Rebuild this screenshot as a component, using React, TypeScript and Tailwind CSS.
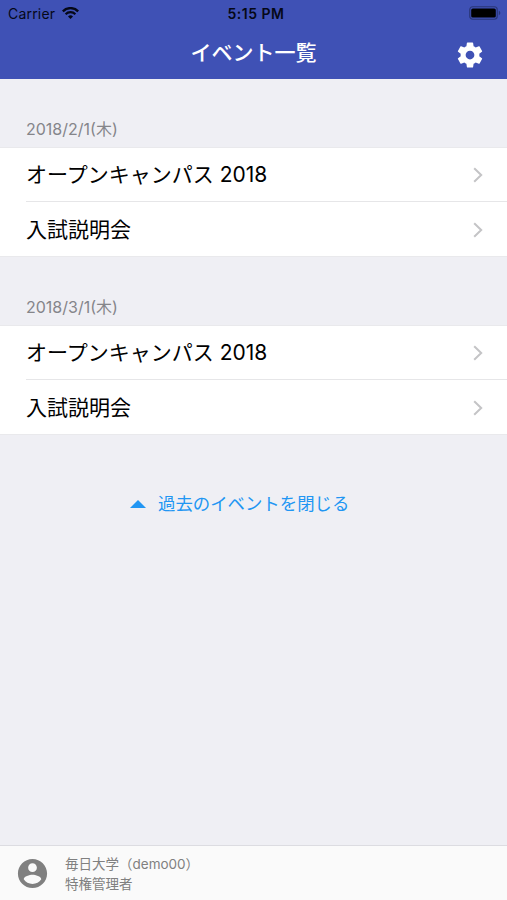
import React from "react";

type EventItem = {
  id: string;
  name: string;
};

type EventGroup = {
  date: string;
  events: EventItem[];
};

const eventGroups: EventGroup[] = [
  {
    date: "2018/2/1(木)",
    events: [
      { id: "feb-open", name: "オープンキャンパス 2018" },
      { id: "feb-exam", name: "入試説明会" },
    ],
  },
  {
    date: "2018/3/1(木)",
    events: [
      { id: "mar-open", name: "オープンキャンパス 2018" },
      { id: "mar-exam", name: "入試説明会" },
    ],
  },
];

function WifiIcon() {
  return (
    <svg className="ml-[7px] h-3 w-[17px]" viewBox="0 0 17 12" fill="none">
      <path d="M.8 4.3a10.9 10.9 0 0 1 15.4 0" stroke="#050817" strokeWidth="2.4" />
      <path d="M3.6 7.2a6.9 6.9 0 0 1 9.8 0" stroke="#050817" strokeWidth="2.1" />
      <path d="M8.5 12 6 9.4a3.6 3.6 0 0 1 5 0Z" fill="#050817" />
    </svg>
  );
}

function BatteryIcon() {
  return (
    <svg className="h-[14px] w-[32px]" viewBox="0 0 32 14" fill="none">
      <rect x="0.75" y="0.75" width="27.5" height="12.5" rx="3" stroke="#2a3678" strokeWidth="1.2" />
      <rect x="2.2" y="2.5" width="24.6" height="9" rx="1.6" fill="#000" />
      <path d="M29.8 4.8v4.4c1-.4 1.5-1.2 1.5-2.2s-.5-1.8-1.5-2.2Z" fill="#2a3678" />
    </svg>
  );
}

function SettingsIcon() {
  return (
    <svg className="h-[30px] w-[30px]" viewBox="0 0 24 24" fill="currentColor">
      <path d="M19.43 12.98c.04-.32.07-.64.07-.98s-.03-.66-.07-.98l2.11-1.65c.19-.15.24-.42.12-.64l-2-3.46c-.12-.22-.39-.3-.61-.22l-2.49 1c-.52-.4-1.08-.73-1.69-.98l-.38-2.65C14.46 2.18 14.25 2 14 2h-4c-.25 0-.46.18-.49.42l-.38 2.65c-.61.25-1.17.59-1.69.98l-2.49-1c-.23-.09-.49 0-.61.22l-2 3.46c-.13.22-.07.49.12.64l2.11 1.65c-.04.32-.07.65-.07.98s.03.66.07.98l-2.11 1.65c-.19.15-.24.42-.12.64l2 3.46c.12.22.39.3.61.22l2.49-1c.52.4 1.08.73 1.69.98l.38 2.65c.03.24.24.42.49.42h4c.25 0 .46-.18.49-.42l.38-2.65c.61-.25 1.17-.59 1.69-.98l2.49 1c.23.09.49 0 .61-.22l2-3.46c.12-.22.07-.49-.12-.64l-2.11-1.65zM12 15.5c-1.93 0-3.5-1.57-3.5-3.5s1.57-3.5 3.5-3.5 3.5 1.57 3.5 3.5-1.57 3.5-3.5 3.5z" />
    </svg>
  );
}

function AccountIcon() {
  return (
    <svg className="ml-[15px] h-[35px] w-[35px]" viewBox="0 0 24 24" fill="currentColor">
      <path d="M12 2C6.48 2 2 6.48 2 12s4.48 10 10 10 10-4.48 10-10S17.52 2 12 2zm0 3c1.66 0 3 1.34 3 3s-1.34 3-3 3-3-1.34-3-3 1.34-3 3-3zm0 14.2c-2.5 0-4.71-1.28-6-3.22.03-1.99 4-3.08 6-3.08 1.99 0 5.97 1.09 6 3.08-1.29 1.94-3.5 3.22-6 3.22z" />
    </svg>
  );
}

function Header() {
  return (
    <header className="h-[79px] shrink-0 bg-[#3f51b5]">
      <div className="grid h-[26px] grid-cols-3 items-center pr-[6px] pl-2 text-[#050817]">
        <div className="flex items-center text-[14px] tracking-[0.2px]">
          Carrier
          <WifiIcon />
        </div>
        <span className="pl-[3px] text-center text-[14px] font-semibold tracking-[0.5px] whitespace-nowrap">
          5:15 PM
        </span>
        <div className="flex justify-end">
          <BatteryIcon />
        </div>
      </div>
      <div className="grid h-[53px] grid-cols-[1fr_auto_1fr] items-center pr-[22px] pl-[22px] text-white">
        <span />
        <h1 className="pt-px text-[21px] leading-[50px] font-medium">イベント一覧</h1>
        <button className="mt-1 justify-self-end" aria-label="設定">
          <SettingsIcon />
        </button>
      </div>
    </header>
  );
}

function EventRow({ event }: { event: EventItem }) {
  return (
    <li className="pl-[26px] [&+li>a]:h-[55px] [&+li>a]:border-t [&+li>a]:border-[#e6e6e8] [&+li>a]:pt-px">
      <a href="#" className="flex h-[53px] items-center justify-between pr-6">
        <span className="text-[21px] leading-8 text-black">{event.name}</span>
        <svg className="h-4 w-[10px]" viewBox="0 0 10 16" fill="none">
          <path d="m1.2 1.2 7 6.8-7 6.8" stroke="#c4c4c6" strokeWidth="2" />
        </svg>
      </a>
    </li>
  );
}

export default function App(): React.ReactElement {
  return (
    <div className="flex h-[900px] w-full flex-col overflow-hidden bg-[#efeff4] font-['Inter','Noto_Sans_CJK_JP',sans-serif]">
      <Header />

      <main className="flex-1">
        {eventGroups.map((group) => (
          <section key={group.date}>
            <h2 className="flex h-[69px] items-end border-b border-[#e9e9ec] pb-[6px] pl-[26px] text-[16px] leading-6 text-[#85858a]">
              {group.date}
            </h2>
            <ul className="border-b border-[#e9e9ec] bg-white">
              {group.events.map((event) => (
                <EventRow key={event.id} event={event} />
              ))}
            </ul>
          </section>
        ))}

        <button className="mt-[55px] ml-[130px] flex h-7 items-center text-[17.4px] text-[#2196f3]">
          <svg className="mr-3 h-2 w-4" viewBox="0 0 16 8">
            <path d="M0 8 8 0l8 8Z" fill="#2196f3" />
          </svg>
          過去のイベントを閉じる
        </button>
      </main>

      <footer className="flex h-[55px] shrink-0 items-center border-t border-[#dcdce1] bg-[#fafafa] text-[#808080]">
        <AccountIcon />
        <div className="mt-[2px] ml-[15px] text-[13.5px] leading-5">
          <p>毎日大学（demo00）</p>
          <p>特権管理者</p>
        </div>
      </footer>
    </div>
  );
}
